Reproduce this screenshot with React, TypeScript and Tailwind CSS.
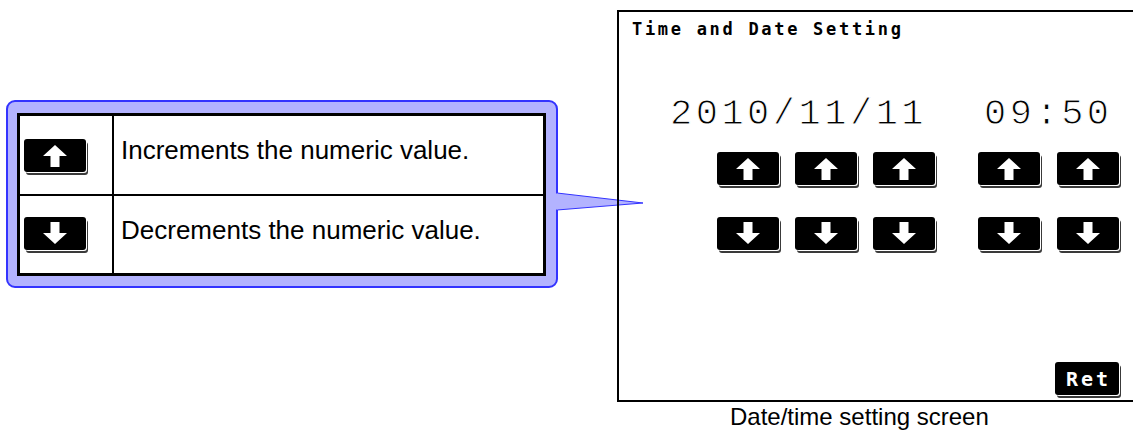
import React from "react";

const UP = "31,6 43,17 35.5,17 35.5,28 26.5,28 26.5,17 19,17";
const DOWN = "26.5,5 35.5,5 35.5,16 43,16 31,27 19,16 26.5,16";

function Btn({ dir }: { dir: "up" | "down" }) {
  return (
    <div className="w-[62px] h-[33px] bg-black rounded-[3px] shadow-[1px_1px_0_0_#ffffff,2px_3px_0_0_#3a3a3a] shrink-0">
      <svg width="62" height="33" viewBox="0 0 62 33" className="block">
        <polygon fill="#ffffff" points={dir === "up" ? UP : DOWN} />
      </svg>
    </div>
  );
}

export default function App() {
  return (
    <div className="relative w-[1133px] h-[436px] overflow-hidden bg-white flex">
      {/* Callout */}
      <div className="shrink-0 pl-[6px] pt-[100px]">
        <div className="w-[552px] h-[188px] rounded-[9px] border-2 border-[#3333ff] bg-[#b3b3ff] pl-[9px] pt-[11px]">
          <div className="w-[529px] h-[163px] border-[3px] border-black bg-white flex flex-col [font-family:'Liberation_Sans',Arial,sans-serif] text-[26px] leading-[30px] text-black">
            <div className="h-[80px] border-b-2 border-black flex">
              <div className="w-[94px] border-r-2 border-black flex items-center pl-[4px]">
                <Btn dir="up" />
              </div>
              <div className="pl-[7px] pt-[19px]">Increments the numeric value.</div>
            </div>
            <div className="flex-1 flex">
              <div className="w-[94px] border-r-2 border-black flex items-center pl-[4px] pb-[2px]">
                <Btn dir="down" />
              </div>
              <div className="pl-[7px] pt-[19px]">Decrements the numeric value.</div>
            </div>
          </div>
        </div>
      </div>

      {/* Pointer */}
      <svg className="absolute left-[555px] top-[191px]" width="92" height="22" viewBox="0 0 92 22">
        <polygon points="2,2 88,12 2,19" fill="#b3b3ff" stroke="#3333ff" strokeWidth="1" />
        <rect x="0" y="2.5" width="3" height="16" fill="#b3b3ff" />
      </svg>

      {/* Screen */}
      <div className="relative shrink-0 ml-[59px] pt-[10px] flex flex-col">
        <div className="w-[560px] h-[392px] border-2 border-black flex flex-col">
          <div className="pl-[13px] pt-[8px] [font-family:'DejaVu_Sans_Mono',monospace] font-bold text-[17px] leading-[18px] tracking-[2.7px] text-black">
            Time and Date Setting
          </div>
          <div className="mt-[58px] flex [font-family:'Liberation_Mono','Courier_New',monospace] text-[37px] leading-[37px] tracking-[3.5px] text-black [-webkit-text-stroke:1px_#ffffff]">
            <span className="ml-[51px]">2010/11/11</span>
            <span className="ml-[57px]">09:50</span>
          </div>
          <div className="mt-[19px] flex">
            <div className="ml-[98px] flex gap-[16px]">
              <Btn dir="up" />
              <Btn dir="up" />
              <Btn dir="up" />
            </div>
            <div className="ml-[43px] flex gap-[17px]">
              <Btn dir="up" />
              <Btn dir="up" />
            </div>
          </div>
          <div className="mt-[32px] flex">
            <div className="ml-[98px] flex gap-[16px]">
              <Btn dir="down" />
              <Btn dir="down" />
              <Btn dir="down" />
            </div>
            <div className="ml-[43px] flex gap-[17px]">
              <Btn dir="down" />
              <Btn dir="down" />
            </div>
          </div>
          <div className="mt-[112px] flex">
            <div className="ml-[436px] w-[64px] h-[33px] bg-black rounded-[3px] shadow-[1px_1px_0_0_#ffffff,2px_3px_0_0_#3a3a3a] flex items-center pl-[11px] [font-family:'DejaVu_Sans_Mono',monospace] font-bold text-[20px] leading-[20px] tracking-[3px] text-white">
              Ret
            </div>
          </div>
        </div>
        <div className="pl-[113px] mt-[1px] [font-family:'Liberation_Sans',Arial,sans-serif] text-[24px] leading-[28px] text-black">
          Date/time setting screen
        </div>
      </div>
    </div>
  );
}
